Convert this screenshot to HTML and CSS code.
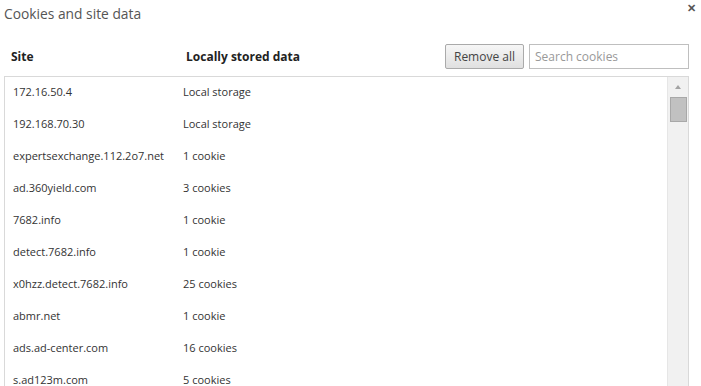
FILE: index.html
```html
<!DOCTYPE html>
<html>
<head>
<link rel="stylesheet" href="styles.css">
</head>
<body>
<div class="dialog">
  <div class="title-bar">
    <h1 class="title">Cookies and site data</h1>
    <span class="close">&#x2715;</span>
  </div>
  <div class="head-row">
    <span class="col-site">Site</span>
    <span class="col-data">Locally stored data</span>
    <div class="tools">
      <button class="btn">Remove all</button>
      <input class="search" type="text" placeholder="Search cookies">
    </div>
  </div>
  <div class="list">
    <div class="rows">
      <div class="row"><span class="site">172.16.50.4</span><span>Local storage</span></div>
      <div class="row"><span class="site">192.168.70.30</span><span>Local storage</span></div>
      <div class="row"><span class="site">expertsexchange.112.2o7.net</span><span>1 cookie</span></div>
      <div class="row"><span class="site">ad.360yield.com</span><span>3 cookies</span></div>
      <div class="row"><span class="site">7682.info</span><span>1 cookie</span></div>
      <div class="row"><span class="site">detect.7682.info</span><span>1 cookie</span></div>
      <div class="row"><span class="site">x0hzz.detect.7682.info</span><span>25 cookies</span></div>
      <div class="row"><span class="site">abmr.net</span><span>1 cookie</span></div>
      <div class="row"><span class="site">ads.ad-center.com</span><span>16 cookies</span></div>
      <div class="row"><span class="site">s.ad123m.com</span><span>5 cookies</span></div>
    </div>
    <div class="scrollbar">
      <span class="arrow"></span>
      <span class="thumb"></span>
    </div>
  </div>
</div>
</body>
</html>
```

FILE: styles.css
```css
body {
    margin: 0;
    background: #fff;
    font-family: 'Open Sans', sans-serif;
    color: #333;
    overflow: hidden;
}
.dialog {
    width: 701px;
    height: 386px;
}
.title-bar {
    display: flex;
    justify-content: space-between;
    padding: 0 5px 0 4px;
}
.title {
    margin: 4px 0 0 0;
    font-size: 13.8px;
    font-weight: normal;
    color: #555;
}
.close {
    font-size: 11px;
    color: #555;
    font-weight: bold;
}
.head-row {
    display: flex;
    align-items: center;
    margin-top: 20px;
    padding-left: 11px;
    height: 26px;
}
.col-site, .col-data {
    font-weight: bold;
    font-size: 12px;
    color: #222;
}
.col-site {
    width: 175px;
}
.tools {
    margin-left: auto;
    margin-right: 12px;
    display: flex;
    gap: 5px;
}
.btn {
    width: 79px;
    height: 25px;
    border: 1px solid #aaa;
    border-radius: 2px;
    background: linear-gradient(#f6f6f6, #e0e0e0);
    font-family: inherit;
    font-size: 12px;
    color: #444;
    padding: 0;
}
.search {
    width: 160px;
    height: 25px;
    box-sizing: border-box;
    border: 1px solid #bfbfbf;
    padding: 0 5px;
    font-family: inherit;
    font-size: 12px;
}
.search::placeholder {
    color: #999;
}
.list {
    margin: 7px 12px 0 4px;
    border: 1px solid #d9d9d9;
    border-bottom: none;
    display: flex;
    height: 320px;
    overflow: hidden;
}
.rows {
    flex: 1;
    margin-top: -2px;
}
.row {
    display: flex;
    height: 32px;
    align-items: center;
    padding-left: 8px;
    font-size: 11px;
    color: #333;
}
.site {
    width: 170px;
}
.scrollbar {
    width: 20px;
    background: #f1f1f1;
    border-left: 1px solid #e6e6e6;
    display: flex;
    flex-direction: column;
    align-items: center;
}
.arrow {
    margin-top: 8px;
    width: 0;
    height: 0;
    border-left: 3px solid transparent;
    border-right: 3px solid transparent;
    border-bottom: 4px solid #a3a3a3;
}
.thumb {
    margin-top: 8px;
    width: 17px;
    height: 25px;
    background: #c1c1c1;
    border: 1px solid #a8a8a8;
    box-sizing: border-box;
}
```
